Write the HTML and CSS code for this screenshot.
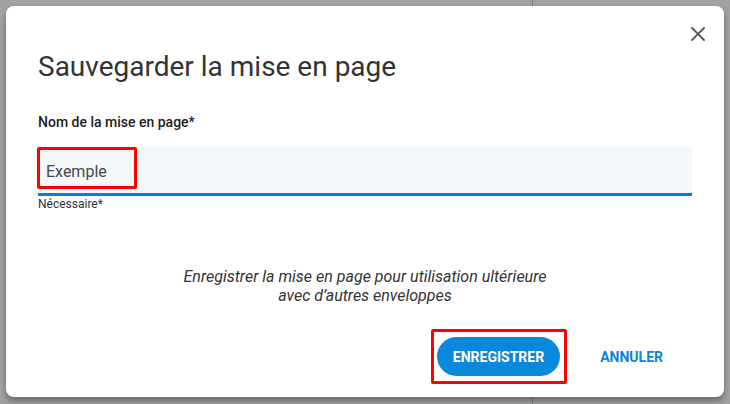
FILE: index.html
```html
<!DOCTYPE html>
<html lang="fr">
<head>
<meta charset="utf-8">
<title>Sauvegarder la mise en page</title>
<link rel="stylesheet" href="styles.css">
</head>
<body>
<div class="page">
  <div class="pane-left"></div>
  <div class="pane-right"></div>
</div>
<div class="dialog" role="dialog">
  <button class="close" aria-label="Fermer">
    <svg width="14" height="14" viewBox="0 0 14 14"><path d="M1 1 L13 13 M13 1 L1 13" stroke="#555" stroke-width="1.8" stroke-linecap="square" fill="none"/></svg>
  </button>
  <h1 class="title">Sauvegarder la mise en page</h1>
  <label class="label" for="nom">Nom de la mise en page*</label>
  <div class="field">
    <input id="nom" class="input" type="text" value="Exemple">
    <span class="mark mark-input"></span>
  </div>
  <div class="helper">Nécessaire*</div>
  <p class="desc">Enregistrer la mise en page pour utilisation ultérieure<br>avec d’autres enveloppes</p>
  <div class="footer">
    <div class="primary-wrap">
      <button class="btn-primary">ENREGISTRER</button>
      <span class="mark mark-btn"></span>
    </div>
    <button class="btn-text">ANNULER</button>
  </div>
</div>
</body>
</html>
```
FILE: styles.css
```css
html, body {
  margin: 0;
  padding: 0;
}
body {
  width: 730px;
  height: 404px;
  overflow: hidden;
  background: #a2a2a2;
  font-family: Roboto, "Liberation Sans", sans-serif;
  position: relative;
}
.page {
  display: flex;
  height: 404px;
}
.pane-left {
  width: 532px;
  border-right: 1px solid #7c7c7c;
}
.pane-right {
  flex: 1;
}
.dialog {
  position: absolute;
  left: 6px;
  top: 6px;
  width: 718px;
  height: 391px;
  box-sizing: border-box;
  padding: 45px 32px 0;
  background: #fff;
  border-radius: 8px;
  box-shadow: 0 4px 6px rgba(0, 0, 0, 0.35);
  display: flex;
  flex-direction: column;
}
.close {
  position: absolute;
  right: 19px;
  top: 21px;
  width: 14px;
  height: 14px;
  padding: 0;
  border: 0;
  background: none;
  display: flex;
}
.title {
  margin: 0;
  font-size: 28px;
  line-height: 32px;
  font-weight: 400;
  color: #333;
}
.label {
  margin-top: 29px;
  font-size: 14px;
  line-height: 20px;
  font-weight: 500;
  color: #222;
}
.field {
  position: relative;
  margin-top: 15px;
}
.input {
  display: block;
  width: 100%;
  height: 49px;
  box-sizing: border-box;
  margin: 0;
  padding: 2px 8px 0;
  border: 0;
  border-bottom: 3px solid #0a7fd2;
  background: #f3f8fc;
  font-family: Roboto, "Liberation Sans", sans-serif;
  font-size: 16px;
  color: #474747;
  outline: none;
}
.mark {
  position: absolute;
  border: 3px solid #f00;
  border-radius: 2px;
  box-sizing: border-box;
  pointer-events: none;
}
.mark-input {
  left: -1px;
  top: 0;
  width: 100px;
  height: 42px;
}
.helper {
  font-size: 12px;
  line-height: 16px;
  color: #333;
}
.desc {
  margin: 55px 0 0;
  text-align: center;
  font-style: italic;
  font-size: 16px;
  line-height: 19px;
  color: #333;
}
.footer {
  display: flex;
  justify-content: flex-end;
  align-items: center;
  gap: 24px;
  margin-top: 32px;
  padding-right: 13px;
}
.primary-wrap {
  position: relative;
}
.btn-primary {
  display: block;
  height: 39px;
  padding: 0 16px;
  border: 0;
  border-radius: 20px;
  background: #0a88db;
  color: #fff;
  font-family: Roboto, "Liberation Sans", sans-serif;
  font-size: 14px;
  font-weight: 700;
}
.mark-btn {
  left: -6px;
  top: -8px;
  right: -7px;
  bottom: -8px;
}
.btn-text {
  height: 39px;
  padding: 0 16px;
  border: 0;
  background: none;
  color: #0a84d8;
  font-family: Roboto, "Liberation Sans", sans-serif;
  font-size: 14px;
  font-weight: 700;
}
```
